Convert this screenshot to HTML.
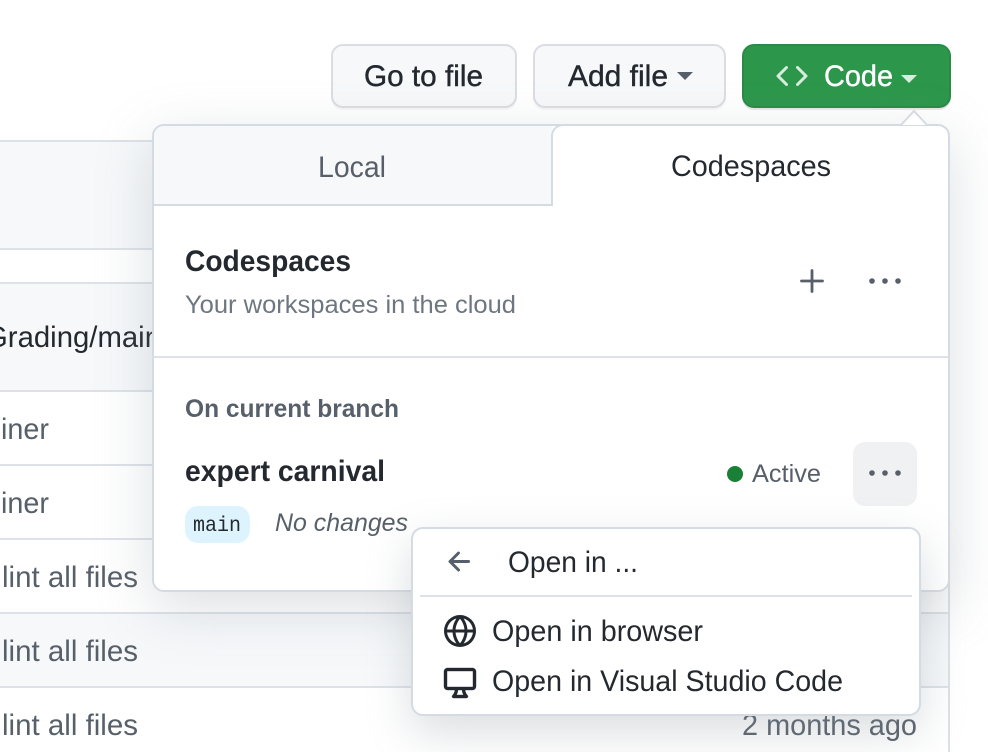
<!DOCTYPE html>
<html lang="en">
<head>
<meta charset="utf-8">
<title>Codespaces</title>
<style>
html,body{margin:0;padding:0;background:#fff}
body{width:988px;height:752px;overflow:hidden;position:relative;font-family:"Liberation Sans",sans-serif}
.a{position:absolute;box-sizing:border-box}
svg{position:absolute;left:0;top:0;overflow:visible}
text{font-family:"Liberation Sans",sans-serif}
.btn{background:#f6f8fa;border:2px solid #dadde1;border-radius:12px;box-shadow:0 2px 0 rgba(31,35,40,.04)}
.ln{background:#dde2e8;height:2px}
</style>
</head>
<body>
<!-- table -->
<div class="a" style="left:0;top:141px;width:950px;height:108px;background:#f6f8fa"></div>
<div class="a" style="left:0;top:283px;width:950px;height:108px;background:#f6f8fa"></div>
<div class="a" style="left:0;top:613px;width:950px;height:74px;background:#f6f8fa"></div>
<div class="a ln" style="left:0;top:140px;width:950px"></div>
<div class="a ln" style="left:0;top:248px;width:950px"></div>
<div class="a ln" style="left:0;top:282px;width:950px"></div>
<div class="a ln" style="left:0;top:390px;width:950px"></div>
<div class="a ln" style="left:0;top:464px;width:950px"></div>
<div class="a ln" style="left:0;top:538px;width:950px"></div>
<div class="a ln" style="left:0;top:612px;width:950px"></div>
<div class="a ln" style="left:0;top:686px;width:950px"></div>
<div class="a" style="left:948px;top:140px;width:2px;height:612px;background:#dde2e8"></div>
<svg width="988" height="752">
<g font-size="29.500" fill="#57606a">
<text x="-15" y="347" textLength="176" lengthAdjust="spacingAndGlyphs" fill="#24292f">Grading/main</text>
<text x="1" y="439" textLength="48" lengthAdjust="spacingAndGlyphs">iner</text>
<text x="1" y="513" textLength="48" lengthAdjust="spacingAndGlyphs">iner</text>
<text x="2" y="587" textLength="136" lengthAdjust="spacingAndGlyphs">lint all files</text>
<text x="2" y="661" textLength="136" lengthAdjust="spacingAndGlyphs">lint all files</text>
<text x="2" y="735" textLength="136" lengthAdjust="spacingAndGlyphs">lint all files</text>
<text x="742" y="735" textLength="175" lengthAdjust="spacingAndGlyphs">2 months ago</text>
</g>
</svg>

<!-- buttons -->
<div class="a btn" style="left:331px;top:44px;width:186px;height:64px"></div>
<div class="a btn" style="left:533px;top:44px;width:193px;height:64px"></div>
<div class="a" style="left:742px;top:44px;width:209px;height:64px;background:#2c974b;border:2px solid #2a8a46;border-radius:12px;box-shadow:0 2px 0 rgba(31,35,40,.1)"></div>
<svg width="988" height="752">
<g font-size="29.500" fill="#24292f" stroke="#24292f" stroke-width=".4">
<text x="364" y="86" textLength="119" lengthAdjust="spacingAndGlyphs">Go to file</text>
<text x="568" y="86" textLength="100" lengthAdjust="spacingAndGlyphs">Add file</text>
</g>
<path d="M677 72h16l-8 8z" fill="#57606a"/>
<path transform="translate(776 60) scale(2)" fill="#fff" fill-opacity=".82" d="m11.28 3.22 4.25 4.25a.75.75 0 0 1 0 1.06l-4.25 4.25a.749.749 0 0 1-1.275-.326.749.749 0 0 1 .215-.734L13.94 8l-3.72-3.72a.749.749 0 0 1 .326-1.275.749.749 0 0 1 .734.215Zm-6.56 0a.751.751 0 0 1 1.042.018.751.751 0 0 1 .018 1.042L2.06 8l3.72 3.72a.749.749 0 0 1-.326 1.275.749.749 0 0 1-.734-.215L.47 8.53a.75.75 0 0 1 0-1.06Z"/>
<text x="824" y="86" font-size="29.500" fill="#fff" stroke="#fff" stroke-width=".4" textLength="69" lengthAdjust="spacingAndGlyphs">Code</text>
<path d="M901 75h16l-8 8z" fill="#fff" fill-opacity=".82"/>
</svg>

<!-- panel -->
<div class="a" style="left:152px;top:124px;width:798px;height:468px;background:#fff;border:2px solid #d5dbe2;border-radius:12px;box-shadow:0 16px 56px rgba(140,149,159,.3)"></div>
<div class="a" style="left:154px;top:126px;width:398px;height:78px;background:#f6f8fa;border-top-left-radius:10px"></div>
<div class="a" style="left:152px;top:204px;width:401px;height:2px;background:#d5dbe2"></div>
<div class="a" style="left:551px;top:124px;width:30px;height:82px;box-sizing:border-box;border-left:2px solid #d5dbe2;border-top:2px solid #d5dbe2;border-top-left-radius:12px;background:#fff"></div>
<div class="a" style="left:153px;top:356px;width:796px;height:2px;background:#dde2e8"></div>
<svg width="988" height="752">
<path d="M901 125L914 111L927 125" fill="#fff" stroke="#d5dbe2" stroke-width="2"/>
<path d="M902 126h24v2h-24z" fill="#fff"/>
<text x="318" y="177" font-size="29.500" fill="#57606a" textLength="68" lengthAdjust="spacingAndGlyphs">Local</text>
<text x="671" y="176" font-size="29.500" fill="#24292f" textLength="160" lengthAdjust="spacingAndGlyphs">Codespaces</text>
<text x="185" y="271" font-size="29.500" font-weight="700" fill="#24292f" textLength="166" lengthAdjust="spacingAndGlyphs">Codespaces</text>
<text x="185" y="313" font-size="25.400" fill="#6e7781" textLength="331" lengthAdjust="spacingAndGlyphs">Your workspaces in the cloud</text>
<path d="M812 270.500v21M801.500 281h21" stroke="#57606a" stroke-width="2.800" stroke-linecap="round" fill="none"/>
<g fill="#57606a"><circle cx="872" cy="281" r="2.800"/><circle cx="885" cy="281" r="2.800"/><circle cx="898" cy="281" r="2.800"/></g>
<text x="185" y="417" font-size="25.400" font-weight="700" fill="#57606a" textLength="214" lengthAdjust="spacingAndGlyphs">On current branch</text>
<text x="185" y="481" font-size="29.500" font-weight="700" fill="#24292f" textLength="200" lengthAdjust="spacingAndGlyphs">expert carnival</text>
<circle cx="735" cy="474" r="8" fill="#1a7f37"/>
<text x="752" y="482" font-size="25.400" fill="#57606a" textLength="69" lengthAdjust="spacingAndGlyphs">Active</text>
<rect x="853" y="442" width="64" height="64" rx="12" fill="#f0f1f3"/>
<g fill="#57606a"><circle cx="872" cy="473" r="2.800"/><circle cx="885" cy="473" r="2.800"/><circle cx="898" cy="473" r="2.800"/></g>
<rect x="185" y="506" width="65" height="37" rx="13" fill="#ddf4ff"/>
<text x="193" y="531" font-size="21.500" fill="#24292f" style="font-family:'Liberation Mono',monospace" textLength="48" lengthAdjust="spacingAndGlyphs">main</text>
<text x="275" y="531" font-size="25.400" font-style="italic" fill="#57606a" textLength="133" lengthAdjust="spacingAndGlyphs">No changes</text>
</svg>

<!-- menu -->
<div class="a" style="left:411px;top:527px;width:510px;height:189px;background:#fff;border:2px solid #d5dbe2;border-radius:12px;box-shadow:0 16px 44px rgba(140,149,159,.32)"></div>
<div class="a" style="left:420px;top:595px;width:492px;height:2px;background:#dde2e8"></div>
<svg width="988" height="752">
<path transform="translate(444 546) scale(2)" fill="#57606a" d="M7.780 12.530a.75.75 0 0 1-1.060 0L2.470 8.280a.75.75 0 0 1 0-1.060l4.250-4.250a.751.751 0 0 1 1.042.018.751.751 0 0 1 .018 1.042L4.810 7h7.440a.75.75 0 0 1 0 1.500H4.810l2.970 2.970a.75.75 0 0 1 0 1.060Z"/>
<text x="508" y="572" font-size="29.500" fill="#24292f" textLength="130" lengthAdjust="spacingAndGlyphs">Open in ...</text>
<path transform="translate(444 615) scale(2)" fill="#24292f" d="M8 0a8 8 0 1 1 0 16A8 8 0 0 1 8 0ZM5.780 8.750a9.640 9.640 0 0 0 1.363 4.177c.255.426.542.832.857 1.215.245-.296.551-.705.857-1.215A9.640 9.640 0 0 0 10.220 8.750Zm4.440-1.500a9.640 9.640 0 0 0-1.363-4.177c-.307-.51-.612-.919-.857-1.215a9.927 9.927 0 0 0-.857 1.215A9.640 9.640 0 0 0 5.780 7.250Zm-5.944 1.500H1.543a6.507 6.507 0 0 0 4.666 5.500c-.123-.181-.24-.365-.352-.552-.715-1.192-1.437-2.874-1.581-4.948Zm-2.733-1.500h2.733c.144-2.074.866-3.756 1.580-4.948.12-.197.237-.381.353-.552a6.507 6.507 0 0 0-4.666 5.500Zm10.181 1.500c-.144 2.074-.866 3.756-1.580 4.948-.12.197-.237.381-.353.552a6.507 6.507 0 0 0 4.666-5.500Zm2.733-1.500a6.507 6.507 0 0 0-4.666-5.500c.123.181.24.365.353.552.714 1.192 1.436 2.874 1.580 4.948Z"/>
<text x="492" y="641" font-size="29.500" fill="#24292f" textLength="211" lengthAdjust="spacingAndGlyphs">Open in browser</text>
<path transform="translate(444 666) scale(2)" fill="#24292f" stroke="#24292f" stroke-width=".2" d="M14.250 1c.966 0 1.750.784 1.750 1.750v7.500A1.750 1.750 0 0 1 14.250 12h-3.727c.099 1.041.52 1.872 1.292 2.757A.752.752 0 0 1 11.250 16h-6.500a.75.75 0 0 1-.565-1.243c.772-.885 1.192-1.716 1.292-2.757H1.750A1.750 1.750 0 0 1 0 10.250v-7.500C0 1.784.784 1 1.750 1ZM1.750 2.500a.25.25 0 0 0-.25.25v7.500c0 .138.112.25.25.25h12.500a.25.25 0 0 0 .25-.25v-7.500a.25.25 0 0 0-.25-.25ZM9.018 12H6.982a5.720 5.720 0 0 1-.765 2.500h3.566a5.720 5.720 0 0 1-.765-2.500Z"/>
<text x="492" y="691" font-size="29.500" fill="#24292f" textLength="351" lengthAdjust="spacingAndGlyphs">Open in Visual Studio Code</text>
</svg>
</body>
</html>
